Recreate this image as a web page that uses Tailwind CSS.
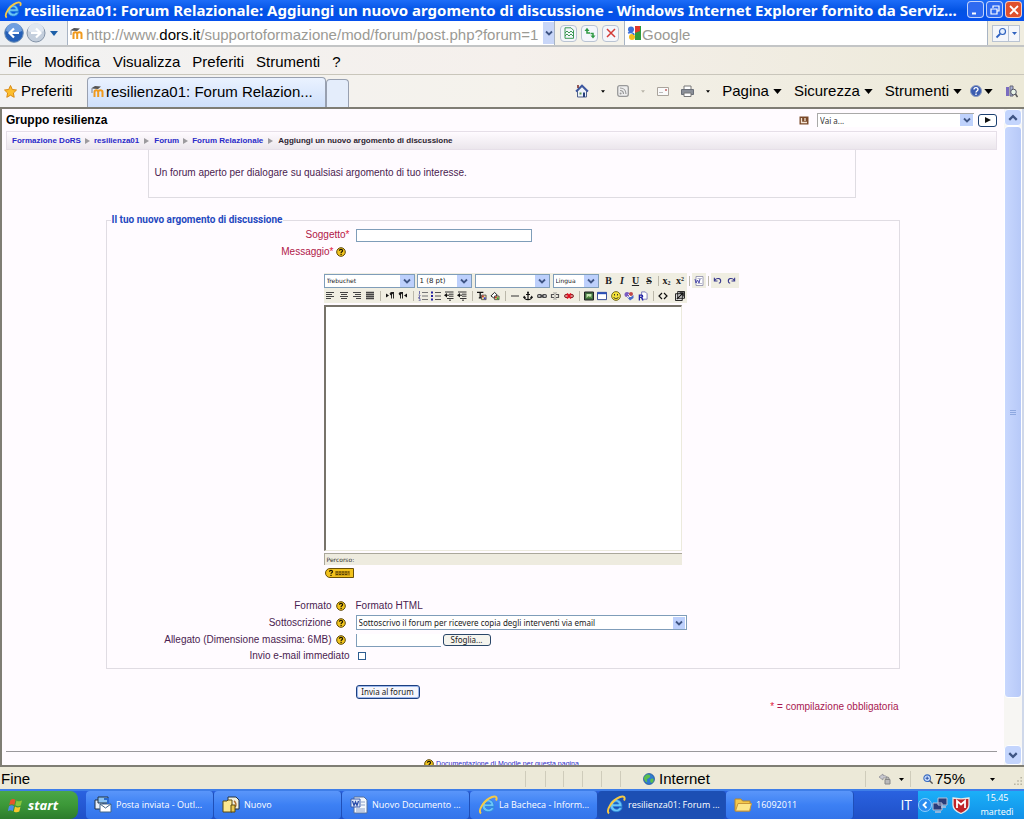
<!DOCTYPE html>
<html lang="it">
<head>
<meta charset="utf-8">
<title>resilienza01: Forum Relazionale: Aggiungi un nuovo argomento di discussione</title>
<script src="https://cdn.jsdelivr.net/npm/@tailwindcss/browser@4"></script>
</head>
<body class="flex h-screen flex-col overflow-hidden bg-[#ece9d8] font-['Liberation_Sans',sans-serif] text-black">

<svg class="hidden" aria-hidden="true">
  <symbol id="ie" viewBox="0 0 20 20"><path d="M16 11.500H7.200c.2 3 5 3.600 6 1.200h3c-2 6-12.200 5.300-12.200-2.200 0-8 12-8.500 12 1zM7.300 9h5.500c-.4-2.800-5-2.800-5.500 0z" fill="#6cc6f8" stroke="#2a86d8" stroke-width=".8"/><path d="M3 18.500C-.5 15.500 6 5 14 2c4-1.500 5.500.5 4 3.500" fill="none" stroke="#f6c945" stroke-width="2"/></symbol>
  <symbol id="moodle" viewBox="0 0 14 13"><path d="M3.500 12V7c0-2.500 3.700-2.500 3.700 0v5M7.200 7c0-2.500 4.300-2.500 4.300 0v5" fill="none" stroke="#f09a1c" stroke-width="2"/><path d="M0 3.500 4 1l6 .5-3 2.500z" fill="#555"/><path d="M1 4v4" stroke="#666" stroke-width=".8"/></symbol>
  <symbol id="chev" viewBox="0 0 8 8"><path d="M1 2.500 4 5.500l3-3" fill="none" stroke="#3f5584" stroke-width="1.800"/></symbol>
  <symbol id="tri" viewBox="0 0 10 6"><path d="M0 0h10L5 6z" fill="currentColor"/></symbol>
  <symbol id="sep" viewBox="0 0 5 6"><path d="M0 0l5 3-5 3z" fill="#9c9a9e"/></symbol>
  <symbol id="help" viewBox="0 0 10 10"><circle cx="5" cy="5" r="4.300" fill="#f2c51e" stroke="#5c4708" stroke-width="1"/><path d="M3.400 3.800c0-2 3.200-2 3.200 0 0 1-1.500 1-1.500 2.100M5.100 6.800v1.300" fill="none" stroke="#1a1400" stroke-width="1.200"/></symbol>
  <symbol id="al" viewBox="0 0 10 10"><path d="M1 1.500h8M1 3.500h6M1 5.500h8M1 7.500h5" stroke="#444"/></symbol>
  <symbol id="ac" viewBox="0 0 10 10"><path d="M1 1.500h8M2 3.500h6M1 5.500h8M2 7.500h6" stroke="#444"/></symbol>
  <symbol id="ar" viewBox="0 0 10 10"><path d="M1 1.500h8M3 3.500h6M1 5.500h8M4 7.500h5" stroke="#444"/></symbol>
  <symbol id="aj" viewBox="0 0 10 10"><path d="M1 1.500h8M1 3.500h8M1 5.500h8M1 7.500h8" stroke="#444" stroke-width="1.300"/></symbol>
  <symbol id="ltr" viewBox="0 0 10 10"><path d="M1 2.500v4L4 4.500z" fill="#111"/><path d="M6.500 1.500v6M8.500 1.500v6M9 1.500H6.500a1.300 1.300 0 0 0 0 2.600" fill="#111" stroke="#111" stroke-width=".9"/></symbol>
  <symbol id="rtl" viewBox="0 0 10 10"><path d="M9 2.500v4L6 4.500z" fill="#111"/><path d="M2.500 1.500v6M4.500 1.500v6M5 1.500H2.500a1.300 1.300 0 0 0 0 2.600" fill="#111" stroke="#111" stroke-width=".9"/></symbol>
  <symbol id="ol" viewBox="0 0 10 10"><path d="M4 1.500h6M4 5h6M4 8.500h6" stroke="#777"/><path d="M1.500 0v3M.5 4h1.500v1L.5 6.500H2M.5 7.500H2v2.500H.5" fill="none" stroke="#5050a0" stroke-width=".8"/></symbol>
  <symbol id="ul" viewBox="0 0 10 10"><path d="M4 1.500h6M4 5h6M4 8.500h6" stroke="#555"/><path d="M0 .5h2v2H0zM0 4h2v2H0zM0 7.500h2v2H0z" fill="#2222a0"/></symbol>
  <symbol id="out" viewBox="0 0 10 10"><path d="M1 1h8.500M5 3.200h4.500M5 5.200h4.500M3 7.500h6.500M5 9.200h2" stroke="#333"/><path d="M0 4.200 3 2v4.400z" fill="#111"/><path d="M2 4.200h3" stroke="#111"/></symbol>
  <symbol id="fc" viewBox="0 0 11 10"><path d="M0 1h7M3.500 1v6M2 7h3" stroke="#111" stroke-width="1.400"/><path d="M5 4h5v5H5z" fill="#e8e0a0" stroke="#333" stroke-width=".8"/><path d="M5.500 4.500h2v2h-2z" fill="#c33"/><path d="M7.500 6.500h2v2h-2z" fill="#33c"/></symbol>
  <symbol id="bc" viewBox="0 0 11 10"><path d="M1 5 5 1l3 3-4 3z" fill="#fff" stroke="#111"/><path d="M5 5h5v4H5z" fill="#e8d890" stroke="#333" stroke-width=".8"/><path d="M5.500 5.500h2v2h-2z" fill="#c33"/><path d="M7.500 6.500h2v2h-2z" fill="#3a3"/></symbol>
  <symbol id="hr" viewBox="0 0 10 10"><path d="M1 5h8" stroke="#333"/></symbol>
  <symbol id="anchor" viewBox="0 0 10 10"><path d="M5 2v7M3 3.500h4M1 6c.5 3.500 7.500 3.500 8 0M.5 7l.7-1.500L2.500 7M7.500 7l1.200-1.500L9.500 7" fill="none" stroke="#111" stroke-width="1.200"/><circle cx="5" cy="1.500" r="1" fill="#111"/></symbol>
  <symbol id="link" viewBox="0 0 10 10"><rect x=".6" y="3.500" width="4" height="3" rx="1.300" fill="#bbb" stroke="#444" stroke-width="1.100"/><rect x="5.400" y="3.500" width="4" height="3" rx="1.300" fill="#bbb" stroke="#444" stroke-width="1.100"/><path d="M3 5h4" stroke="#444" stroke-width="1.300"/></symbol>
  <symbol id="unlink" viewBox="0 0 10 10"><path d="M4 3.500H1.500v3H4M6 3.500h2.500v3H6" fill="none" stroke="#555" stroke-width="1.200"/><path d="M5 1v8M3.500 1.500l.5 1M6.500 1.500l-.5 1M3.500 8.500l.5-1M6.500 8.500l-.5-1" stroke="#888" stroke-width=".8"/></symbol>
  <symbol id="nolink" viewBox="0 0 10 10"><rect x=".6" y="3.500" width="4" height="3" rx="1.300" fill="#d88" stroke="#722"/><rect x="5.400" y="3.500" width="4" height="3" rx="1.300" fill="#d88" stroke="#722"/><path d="m3 2.500 4 5M7 2.500l-4 5" stroke="#e01020" stroke-width="1.800"/></symbol>
  <symbol id="img" viewBox="0 0 10 10"><path d="M.5 1h9v8h-9z" fill="#3d6b3d" stroke="#222"/><path d="M2.500 3h5v4h-5z" fill="#c6e7b0"/><path d="m2.500 7 2-2 1.500 1 1.500-1v2z" fill="#4f8a3a"/></symbol>
  <symbol id="tbl" viewBox="0 0 11 10"><path d="M.5 1h10v8H.5z" fill="#fff" stroke="#223a8a"/><path d="M.5 2h10" stroke="#2a50b8" stroke-width="2"/></symbol>
  <symbol id="smile" viewBox="0 0 10 10"><circle cx="5" cy="5" r="4.400" fill="#f4e23a" stroke="#5c520a" stroke-width=".8"/><path d="M3.500 3v1.500M6.500 3v1.500M2.500 6c1 2 4 2 5 0" fill="none" stroke="#222" stroke-width=".9"/></symbol>
  <symbol id="chr" viewBox="0 0 10 10"><circle cx="3" cy="3.500" r="2.500" fill="#7a5cc0"/><circle cx="7" cy="3" r="2" fill="#c04848"/><path d="M3 6h4l2.500-2v3L6 9.500z" fill="#4a6ac8"/><path d="M4 3l3 3M3 5l2 2" stroke="#fff" stroke-width=".8"/></symbol>
  <symbol id="find" viewBox="0 0 11 10"><path d="M4 .5h4l2 2v6H4z" fill="#fff" stroke="#55a" stroke-width=".8"/><path d="M1.500 10V4H4c1.500 0 1.500 2.500 0 2.500H2M4 6.500 5.500 10" fill="none" stroke="#2222a8" stroke-width="1.400"/></symbol>
  <symbol id="code" viewBox="0 0 10 10"><path d="M4 2 1 5l3 3M6 2l3 3-3 3" fill="none" stroke="#111" stroke-width="1.200"/></symbol>
  <symbol id="full" viewBox="0 0 11 11"><path d="M3 .5h7.500V8H3zM.5 3H8v7.500H.5z" fill="#ddd" stroke="#111"/><path d="m2 9 7-7M5 2h4v4" fill="none" stroke="#111" stroke-width="1.300"/></symbol>
  <symbol id="word" viewBox="0 0 10 10"><path d="M2 .5h7v9H2z" fill="#fff" stroke="#88a" stroke-width=".8"/><path d="M3.500 2.500H8M3.500 7.500H8" stroke="#99b" stroke-width=".7"/><path d="m1 3 1 4 1.500-3L5 7l1-4" fill="none" stroke="#4a48a8"/></symbol>
  <symbol id="undo" viewBox="0 0 10 10"><path d="M2 4.500C4 2 9 2 8.500 6c0 1-.8 1.800-2 2M1.500 2v3.500H5" fill="none" stroke="#38388c" stroke-width="1.200"/></symbol>
  <symbol id="flag" viewBox="0 0 16 15"><path d="M2.500 2c2-1.500 3.500-1 5 0L6.300 7C5 6 3.500 5.700 1.200 7z" fill="#e8542c"/><path d="M8.500 2.500c2 1.200 3.500 1 5.500 0L12.800 7.500c-2 1-3.500 1-5.500-.2z" fill="#8cc63c"/><path d="M1 8.200c2-1.200 3.500-1 5 0L4.800 13C3.500 12 2 11.800-.2 13z" fill="#4a8ce8"/><path d="M7 8.600c2 1.200 3.500 1 5.500.2L11.300 13.600c-2 1-3.500 1-5.500-.2z" fill="#f8c82c"/></symbol>
</svg>

<header class="flex h-[21px] shrink-0 items-start bg-linear-to-b from-[#1c6cf8] via-[#0353e4] to-[#0550ee] pl-1 pr-0.5">
  <svg class="mt-px size-[18px] shrink-0"><use href="#ie"/></svg>
  <h1 class="ml-0.5 min-w-0 flex-1 truncate font-['Noto_Sans',sans-serif] text-[15px] font-bold leading-5 text-white">resilienza01: Forum Relazionale: Aggiungi un nuovo argomento di discussione - Windows Internet Explorer fornito da Serviz...</h1>
  <div class="mt-px flex shrink-0 gap-0.5">
    <button aria-label="Riduci a icona" class="grid size-[17px] place-items-center rounded-sm border border-white/70 bg-[#2f6af0]"><svg viewBox="0 0 12 12" class="size-3"><path d="M2 9.500h4" stroke="#fff" stroke-width="2"/></svg></button>
    <button aria-label="Ripristina" class="grid size-[17px] place-items-center rounded-sm border border-white/70 bg-[#2f6af0]"><svg viewBox="0 0 12 12" class="size-3"><path d="M4 4V2h6v5H8M2 5h6v5H2z" fill="none" stroke="#fff" stroke-width="1.200"/></svg></button>
    <button aria-label="Chiudi" class="grid size-[17px] place-items-center rounded-sm border border-white/70 bg-[#e0502c]"><svg viewBox="0 0 12 12" class="size-3"><path d="m2 2 8 8M10 2l-8 8" stroke="#fff" stroke-width="1.800"/></svg></button>
  </div>
</header>

<div class="flex h-[26px] shrink-0 items-stretch border-b-2 border-[#c3c5c6] bg-[#eceff2]">
  <div class="flex w-[67px] shrink-0 items-center pl-1">
    <button aria-label="Indietro"><svg viewBox="0 0 20 20" class="size-5"><circle cx="10" cy="10" r="9.300" fill="#2460b8" stroke="#6d8fb5"/><path d="M2 8a8 8 0 0 1 16 0c-5 2-11 2-16 0z" fill="#6f9fe0"/><path d="M15 10H6M10 5.500 5.500 10l4.500 4.500" fill="none" stroke="#fff" stroke-width="2.200"/></svg></button>
    <button aria-label="Avanti" class="ml-0.5"><svg viewBox="0 0 20 20" class="size-5"><circle cx="10" cy="10" r="9" fill="#c3cedc" stroke="#8494a8"/><path d="M2 8a8 8 0 0 1 16 0c-5 2-11 2-16 0z" fill="#dfe6ef"/><path d="M5 10h9M10 5.500l4.500 4.500-4.500 4.500" fill="none" stroke="#fff" stroke-width="2.200"/></svg></button>
    <button aria-label="Cronologia" class="ml-1 text-[#1b5fa8]"><svg class="h-[5px] w-2"><use href="#tri"/></svg></button>
  </div>
  <form class="flex w-[488px] shrink-0 items-center border-x border-[#a8b4c4] bg-white pl-0.5">
    <svg class="h-[13px] w-[14px] shrink-0"><use href="#moodle"/></svg>
    <div class="ml-0.5 mt-1 min-w-0 flex-1 overflow-hidden whitespace-nowrap text-[15px] leading-5 text-[#9b9a94]" role="textbox" aria-label="Indirizzo">http://www.<span class="text-black">dors.it</span>/supportoformazione/mod/forum/post.php?forum=1</div>
    <button type="button" aria-label="Indirizzi" class="grid h-[22px] w-[11px] place-items-center bg-[#c8d6f8]"><svg class="size-2"><use href="#chev"/></svg></button>
  </form>
  <div class="flex w-[69px] shrink-0 items-center justify-center gap-1 bg-[#f4f2ea]">
    <button aria-label="Visualizzazione compatibilità" class="grid size-[17px] place-items-center rounded-sm border border-[#b9c3d2] bg-[#f4f6fb]"><svg viewBox="0 0 12 12" class="size-3"><path d="M2 .8h6l2.500 2.500v8H2zM2 6l2-2 2 2 2-2 2 2M2 9l2-2 2 2 2-2 2 2" fill="none" stroke="#3d9a54"/></svg></button>
    <button aria-label="Aggiorna" class="grid size-[17px] place-items-center rounded-sm border border-[#b9c3d2] bg-[#f4f6fb]"><svg viewBox="0 0 12 12" class="size-3"><path d="M3 3.500V6h3M9 9V6.500H6.500" fill="none" stroke="#2f9a44" stroke-width="1.500"/><path d="M.5 4 3 .8 5.500 4zM6.500 8.500 9 11.500 11.500 8.500z" fill="#2f9a44"/></svg></button>
    <button aria-label="Interrompi" class="grid size-[17px] place-items-center rounded-sm border border-[#b9c3d2] bg-[#f4f6fb]"><svg viewBox="0 0 12 12" class="size-3"><path d="m2 2 8 8M10 2l-8 8" stroke="#d43a36" stroke-width="1.500"/></svg></button>
  </div>
  <form class="flex min-w-0 flex-1 items-center border-x border-[#a8b4c4] bg-white pl-0.5">
    <svg viewBox="0 0 14 14" class="size-[14px] shrink-0"><path d="M7 0h7v14H7z" fill="#2e9a3c"/><path d="M8 0h5v5l-5 2z" fill="#e03a2c"/><path d="M0 0h8v14H0z" fill="#fff"/><circle cx="4" cy="3.500" r="3" fill="#3a6fd8"/><circle cx="5" cy="11" r="3" fill="#f2bc20"/><path d="M1 7c3-1 6 0 6 2" stroke="#3a6fd8" stroke-width="1.500" fill="none"/></svg>
    <input aria-label="Cerca" placeholder="Google" class="ml-px mt-1 min-w-0 flex-1 text-[15px] leading-5 outline-none placeholder:text-[#9b9a94]">
  </form>
  <div class="flex w-9 shrink-0 items-center bg-[#f0ede0] pl-1">
    <button aria-label="Avvia ricerca" class="grid h-[17px] w-[17px] place-items-center border border-[#b9c3d2] bg-[#f4f6fb]"><svg viewBox="0 0 12 12" class="size-3"><circle cx="7.500" cy="4.500" r="3" fill="#e6f0ff" stroke="#2f62c0" stroke-width="1.200"/><path d="M5 7 1.500 10.500" stroke="#2f62c0" stroke-width="1.800"/></svg></button>
    <button aria-label="Opzioni di ricerca" class="grid h-[17px] w-[11px] place-items-center border-y border-r border-[#b9c3d2] bg-[#f4f6fb] text-[#2f62c0]"><svg class="h-[3px] w-[5px]"><use href="#tri"/></svg></button>
  </div>
</div>

<nav aria-label="Menu" class="flex h-7 shrink-0 items-center gap-3 border-b border-[#c9c6bb] bg-linear-to-r from-[#f2f2f2] via-[#f5f0ec] to-[#ece9d8] pl-2 pt-0.5 text-[15px] leading-5">
  <button>File</button><button>Modifica</button><button class="ml-px">Visualizza</button><button>Preferiti</button><button>Strumenti</button><button>?</button>
</nav>

<div class="flex h-[32px] shrink-0 items-stretch bg-linear-to-r from-[#f2f2f2] via-[#f5f2ec] to-[#ece9d8]">
  <button class="flex w-[87px] shrink-0 items-center gap-1 pl-1 text-[15px] leading-5">
    <svg viewBox="0 0 13 13" class="size-[13px]"><path d="m6.500.5 1.800 4 4.200.5-3.100 3 .8 4.300-3.700-2.100-3.700 2.100.8-4.300L.5 5l4.200-.5z" fill="#fdbf2d" stroke="#d98a14"/></svg>Preferiti</button>
  <button class="mt-0.5 flex w-[239px] shrink-0 items-center gap-px rounded-t-sm border border-b-0 border-[#98a0b0] bg-linear-to-b from-[#eaf2ff] to-[#cfe0fb] pb-0.5 pl-[3px] text-[15px] leading-5">
    <svg class="h-[13px] w-[14px] shrink-0"><use href="#moodle"/></svg><span class="truncate">resilienza01: Forum Relazion...</span></button>
  <button aria-label="Nuova scheda" class="mt-1 w-[23px] shrink-0 rounded-t-sm border border-b-0 border-[#98a0b0] bg-[#e4edfb]"></button>
  <div class="flex flex-1 items-center justify-end gap-3 pr-1.5 text-[15px] leading-5">
    <button aria-label="Pagina iniziale" class="flex items-center gap-3"><svg viewBox="0 0 14 14" class="size-[14px]"><path d="M2.500 7v6h9V7L7 2.500z" fill="#eef2fa" stroke="#50628c"/><path d="M1 7.500 7 1.500l6 6" fill="none" stroke="#3d58a0" stroke-width="1.800"/><path d="M3 1v3" stroke="#7a3030" stroke-width="1.600"/><path d="M8 8.500h2V13H8z" fill="#26407c"/><path d="M4.500 8.500h2v2h-2z" fill="#5a9a50"/></svg><svg class="h-[3px] w-1"><use href="#tri"/></svg></button>
    <button aria-label="Feed" class="flex items-center gap-3 text-[#b8b5aa]"><svg viewBox="0 0 12 12" class="size-3"><rect x=".7" y=".7" width="10.600" height="10.600" rx="2" fill="#eee" stroke="#999" stroke-width="1.300"/><path d="M3 5.500c2 0 3.500 1.500 3.500 3.500M3 3c3.500 0 6 2.500 6 6" fill="none" stroke="#999" stroke-width="1.200"/><circle cx="3.600" cy="8.500" r="1" fill="#999"/></svg><svg class="h-[3px] w-1"><use href="#tri"/></svg></button>
    <button aria-label="Posta"><svg viewBox="0 0 12 9" class="h-[9px] w-3"><path d="M.5.5h11v8H.5z" fill="#fafafa" stroke="#aaa49c"/><path d="M8 2h2v2H8z" fill="#d08a8a"/><path d="M2 5.500h4" stroke="#bbb"/></svg></button>
    <button aria-label="Stampa" class="flex items-center gap-3"><svg viewBox="0 0 13 12" class="h-3 w-[13px]"><path d="M3 1h7v4H3z" fill="#fff" stroke="#777"/><path d="M.5 4.500h12v5H.5z" fill="#8a8f98" stroke="#6a6f78"/><path d="M3 8h7v3.500H3z" fill="#fff" stroke="#777"/></svg><svg class="h-[3px] w-1"><use href="#tri"/></svg></button>
    <button class="flex items-center gap-1">Pagina<svg class="h-[5px] w-[9px]"><use href="#tri"/></svg></button>
    <button class="flex items-center gap-1">Sicurezza<svg class="h-[5px] w-[9px]"><use href="#tri"/></svg></button>
    <button class="flex items-center gap-1">Strumenti<svg class="h-[5px] w-[9px]"><use href="#tri"/></svg></button>
    <button aria-label="Guida" class="-ml-1 flex items-center gap-0.5"><svg viewBox="0 0 12 12" class="size-3"><circle cx="6" cy="6" r="5.500" fill="#3a5cb0" stroke="#8a9ac0"/><path d="M4 4.500c0-2.500 4-2.500 4 0C8 6 6 6 6 7.500M6 8.500V10" fill="none" stroke="#fff" stroke-width="1.400"/></svg><svg class="h-[5px] w-[9px]"><use href="#tri"/></svg></button>
    <button aria-label="Ricerche"><svg viewBox="0 0 13 13" class="size-[13px]"><path d="M1 2h3v9H1z" fill="#7a6cc0"/><path d="M5 1h3v10H5z" fill="#a8b0d8" stroke="#667"/><circle cx="8.500" cy="7" r="2.800" fill="#e8f4e8" stroke="#556"/><path d="m10.500 9 2 3" stroke="#555" stroke-width="1.500"/></svg></button>
  </div>
</div>

<div class="flex min-h-0 flex-1 border-b-2 border-l-2 border-t-2 border-[#7f7d74] bg-[#fffbff]">
  <main class="min-w-0 flex-1 overflow-hidden pl-1 pr-[7px] text-[10px] leading-3 text-[#4a1c50]">
    <div class="flex h-[22px] items-center">
      <h2 class="flex-1 text-[12px] font-bold leading-4 text-black">Gruppo resilienza</h2>
      <svg viewBox="0 0 10 9" class="mr-2 h-[9px] w-[10px]"><path d="M.5.500h9v8h-9z" fill="#7a4a2a"/><path d="M2.500 2v5M6 2v3M2 6.500h6" fill="none" stroke="#f4e4d4" stroke-width="1.300"/></svg>
      <div class="grid w-[157px] items-center">
        <select aria-label="Vai a" class="h-[14px] appearance-none border-l border-t border-[#a9a9a8] bg-white pl-0.5 font-['Noto_Sans',sans-serif] text-[8px] leading-3 text-[#333] [grid-area:1/1]"><option>Vai a...</option></select>
        <span class="pointer-events-none mr-px grid h-3 w-[13px] place-items-center justify-self-end bg-[#c0d2fc] [grid-area:1/1]"><svg class="size-2"><use href="#chev"/></svg></span>
      </div>
      <button aria-label="Vai" class="ml-1 grid h-[13px] w-[19px] place-items-center rounded-[3px] border border-[#1c3f70] bg-white"><svg viewBox="0 0 6 6" class="size-[6px]"><path d="M0 0v6l6-3z" fill="#111"/></svg></button>
    </div>
    <nav aria-label="Percorso" class="flex h-[19px] items-center gap-1 border border-[#e6dfe8] bg-linear-to-b from-[#fffbff] to-[#ebe6ec] pl-[5px] text-[8px] font-bold leading-3 text-[#2a2ac8]">
      <a href="#">Formazione DoRS</a><svg class="h-1.5 w-[5px]"><use href="#sep"/></svg><a href="#">resilienza01</a><svg class="ml-px h-1.5 w-[5px]"><use href="#sep"/></svg><a href="#" class="ml-px">Forum</a><svg class="h-1.5 w-[5px]"><use href="#sep"/></svg><a href="#">Forum Relazionale</a><svg class="ml-px h-1.5 w-[5px]"><use href="#sep"/></svg><span class="ml-px text-[#2c2430]">Aggiungi un nuovo argomento di discussione</span>
    </nav>
    <p class="mx-auto h-12 w-[708px] border border-t-0 border-[#dfdce2] px-1.5 pt-[17px]">Un forum aperto per dialogare su qualsiasi argomento di tuo interesse.</p>

    <form class="pl-0.5">
      <fieldset class="mx-auto mt-4 w-[794px] max-w-full border border-[#e0dce3] pb-[5px]">
        <legend class="ml-1 px-px font-['Roboto',sans-serif] text-[10px] font-bold leading-3 text-[#1f49c0]">Il tuo nuovo argomento di discussione</legend>
        <div class="grid grid-cols-[243px_1fr] items-center gap-x-1.5">
          <label for="sogg" class="text-right text-[#b01848]">Soggetto<span class="text-[#e0203c]">*</span></label>
          <div class="flex h-[18px] items-center pt-px"><input id="sogg" class="h-[13px] w-[176px] border border-[#7f9db9] bg-white px-0.5 text-[9px]"></div>
          <label for="msg" class="flex h-4 items-center justify-end gap-0.5 pr-1 text-[#b01848]"><span>Messaggio<span class="text-[#e0203c]">*</span></span><svg class="size-[10px]"><use href="#help"/></svg></label>
        </div>

        <div class="mx-auto mt-[13px] w-[358px]">
          <div class="flex h-[15px] w-[416px] items-center">
            <div class="flex h-full w-[363px] items-center bg-[#f0eee2] text-[#222]">
              <div class="grid w-[91px] items-center"><select aria-label="Carattere" class="h-[14px] appearance-none border border-[#7f9db9] bg-white pl-0.5 font-['DejaVu_Sans',sans-serif] text-[6px] [grid-area:1/1]"><option>Trebuchet</option></select><span class="pointer-events-none mr-px grid h-3 w-[14px] place-items-center justify-self-end bg-[#bdd0fc] [grid-area:1/1]"><svg class="size-2"><use href="#chev"/></svg></span></div>
              <div class="ml-0.5 grid w-[55px] items-center"><select aria-label="Dimensione" class="h-[14px] appearance-none border border-[#7f9db9] bg-white pl-0.5 font-['DejaVu_Sans',sans-serif] text-[7px] [grid-area:1/1]"><option>1 (8 pt)</option></select><span class="pointer-events-none mr-px grid h-3 w-[14px] place-items-center justify-self-end bg-[#bdd0fc] [grid-area:1/1]"><svg class="size-2"><use href="#chev"/></svg></span></div>
              <div class="ml-[3px] grid w-[75px] items-center"><select aria-label="Stile" class="h-[14px] appearance-none border border-[#7f9db9] bg-white [grid-area:1/1]"><option></option></select><span class="pointer-events-none mr-px grid h-3 w-[14px] place-items-center justify-self-end bg-[#bdd0fc] [grid-area:1/1]"><svg class="size-2"><use href="#chev"/></svg></span></div>
              <div class="ml-[3px] grid w-[46px] items-center"><select aria-label="Lingua" class="h-[14px] appearance-none border border-[#7f9db9] bg-white pl-0.5 font-['DejaVu_Sans',sans-serif] text-[6px] [grid-area:1/1]"><option>Lingua</option></select><span class="pointer-events-none mr-px grid h-3 w-[14px] place-items-center justify-self-end bg-[#bdd0fc] [grid-area:1/1]"><svg class="size-2"><use href="#chev"/></svg></span></div>
              <div class="ml-[3px] flex flex-1 items-center font-['Liberation_Serif',serif] text-[10px] font-bold leading-3">
                <button type="button" class="w-[14px]">B</button><button type="button" class="w-[13px] italic">I</button><button type="button" class="w-[14px] underline">U</button><button type="button" class="w-[13px] line-through">S</button>
                <span class="ml-0.5 h-[10px] w-px bg-[#bbb8aa]"></span>
                <button type="button" class="ml-px w-[14px]">x<sub class="text-[6px]">2</sub></button><button type="button" class="w-[13px]">x<sup class="text-[6px]">2</sup></button>
              </div>
            </div>
            <span class="ml-0.5 h-[10px] w-px bg-[#bbb8aa]"></span>
            <button type="button" aria-label="Pulisci codice Word" class="ml-0.5 grid h-full w-[14px] place-items-center bg-[#f0eee2]"><svg class="size-[10px]"><use href="#word"/></svg></button>
            <span class="mx-0.5 h-[10px] w-px bg-[#bbb8aa]"></span>
            <div class="flex h-full items-center bg-[#f0eee2]">
              <button type="button" aria-label="Annulla" class="grid w-[14px] place-items-center"><svg class="size-[9px]"><use href="#undo"/></svg></button>
              <button type="button" aria-label="Ripeti" class="grid w-[14px] place-items-center"><svg class="size-[9px] -scale-x-100"><use href="#undo"/></svg></button>
            </div>
          </div>
          <div class="flex h-[15px] w-[363px] items-center bg-[#f0eee2] text-[#444] [&>button]:grid [&>button]:w-[13px] [&>button]:shrink-0 [&>button]:place-items-center [&>span]:mx-[3px] [&>span]:h-[10px] [&>span]:w-px [&>span]:bg-[#bbb8aa] [&_svg]:size-[10px]">
            <button type="button" aria-label="Sinistra"><svg><use href="#al"/></svg></button><button type="button" aria-label="Centra" class="ml-px"><svg><use href="#ac"/></svg></button><button type="button" aria-label="Destra"><svg><use href="#ar"/></svg></button><button type="button" aria-label="Giustifica"><svg><use href="#aj"/></svg></button>
            <span></span>
            <button type="button" aria-label="Da sinistra a destra"><svg><use href="#ltr"/></svg></button><button type="button" aria-label="Da destra a sinistra"><svg><use href="#rtl"/></svg></button>
            <span></span>
            <button type="button" aria-label="Elenco numerato"><svg><use href="#ol"/></svg></button><button type="button" aria-label="Elenco puntato"><svg><use href="#ul"/></svg></button><button type="button" aria-label="Riduci rientro"><svg><use href="#out"/></svg></button><button type="button" aria-label="Aumenta rientro"><svg><use href="#out"/></svg></button>
            <span></span>
            <button type="button" aria-label="Colore testo"><svg><use href="#fc"/></svg></button><button type="button" aria-label="Colore sfondo"><svg><use href="#bc"/></svg></button>
            <span></span>
            <button type="button" aria-label="Riga"><svg><use href="#hr"/></svg></button><button type="button" aria-label="Ancora"><svg><use href="#anchor"/></svg></button><button type="button" aria-label="Link" class="ml-px"><svg><use href="#link"/></svg></button><button type="button" aria-label="Rimuovi link"><svg><use href="#unlink"/></svg></button><button type="button" aria-label="Evita link" class="ml-px"><svg><use href="#nolink"/></svg></button>
            <span></span>
            <button type="button" aria-label="Immagine"><svg><use href="#img"/></svg></button><button type="button" aria-label="Tabella"><svg><use href="#tbl"/></svg></button><button type="button" aria-label="Faccina" class="ml-px"><svg><use href="#smile"/></svg></button><button type="button" aria-label="Carattere speciale"><svg><use href="#chr"/></svg></button><button type="button" aria-label="Trova" class="ml-px"><svg><use href="#find"/></svg></button>
            <span></span>
            <button type="button" aria-label="HTML"><svg><use href="#code"/></svg></button><button type="button" aria-label="Schermo intero" class="ml-1"><svg><use href="#full"/></svg></button>
          </div>
          <textarea id="msg" class="mt-0.5 block h-[246px] w-full resize-none border-l-2 border-t-2 border-[#77736a] border-b border-r border-b-[#eceadd] border-r-[#eceadd] bg-white p-1 text-[10px]"></textarea>
          <div class="mt-0.5 h-3 border-l border-t border-[#aaa79a] bg-[#eeebdf] pl-0.5 font-['DejaVu_Sans',sans-serif] text-[6px] leading-[11px] text-[#333]">Percorso:</div>
          <button type="button" aria-label="Scorciatoie da tastiera" class="mt-[3px] block pl-px"><svg viewBox="0 0 29 10" class="h-[10px] w-[29px]"><path d="M5 .5h23.500v9H5A4 4 0 0 1 5 .5z" fill="#f2c21c" stroke="#6a5008"/><path d="M4.500 3.800c0-2 3-2 3 0 0 1-1.500 1-1.500 2M6 6.800V8" fill="none" stroke="#1a1400" stroke-width="1.200"/><path d="M10 3h15v4.500H10z" fill="#b0860e"/><path d="M11 4h13M11 6.500h12" stroke="#5c4606" stroke-dasharray="2 1"/></svg></button>
        </div>

        <div class="mt-5 grid grid-cols-[243px_1fr] items-center gap-x-1.5">
          <div class="flex h-4 items-center justify-end gap-1 pr-1">Formato<svg class="size-[10px]"><use href="#help"/></svg></div>
          <div>Formato HTML</div>
          <label for="sott" class="flex h-[17px] items-center justify-end gap-1 pr-1">Sottoscrizione<svg class="size-[10px]"><use href="#help"/></svg></label>
          <div class="grid w-[331px] items-center">
            <select id="sott" class="h-[15px] appearance-none border border-[#7f9db9] bg-white pl-0.5 font-['Noto_Sans',sans-serif] text-[8px] leading-3 text-[#222] [grid-area:1/1]"><option>Sottoscrivo il forum per ricevere copia degli interventi via email</option></select>
            <span class="pointer-events-none mr-0.5 grid h-3 w-3 place-items-center justify-self-end bg-[#bdd0fc] [grid-area:1/1]"><svg class="size-2"><use href="#chev"/></svg></span>
          </div>
          <label for="alleg" class="flex h-[18px] items-center justify-end gap-1 pr-1">Allegato (Dimensione massima: 6MB)<svg class="size-[10px]"><use href="#help"/></svg></label>
          <div class="flex items-center gap-0.5"><input id="alleg" class="h-[13px] w-[85px] border-b border-l border-[#7f9db9] bg-white px-0.5 text-[8px]"><button type="button" class="h-3 w-12 rounded-[3px] border border-[#2a4668] bg-[#f5f4ee] font-['Noto_Sans',sans-serif] text-[8px] leading-[10px] text-[#222]">Sfoglia...</button></div>
          <label for="invio" class="h-[14px] text-right leading-[14px]">Invio e-mail immediato</label>
          <div class="flex items-center pl-0.5"><input id="invio" type="checkbox" class="size-2 appearance-none border border-[#2c5c90] bg-white checked:bg-[#2c5c90]"></div>
        </div>
      </fieldset>
      <div class="mx-auto w-[794px] max-w-full">
        <button class="ml-[250px] mt-4 block h-[14px] w-16 rounded-[3px] border border-[#1c3f80] bg-[#f6f6fc] font-['Noto_Sans',sans-serif] text-[8px] leading-3 text-[#222] shadow-[inset_0_0_0_1px_#9db8ec]">Invia al forum</button>
        <p class="mt-0.5 pr-px text-right text-[#a81850]"><span class="text-[#e0203c]">*</span> = compilazione obbligatoria</p>
      </div>
    </form>
    <footer class="mt-[38px] border-t border-[#9a989c] pt-[7px] text-[7px] leading-[10px]"><a href="#" class="flex items-center justify-center gap-0.5 text-[#2a2ac8]"><svg class="size-[10px]"><use href="#help"/></svg>Documentazione di Moodle per questa pagina</a></footer>
  </main>
  <div class="flex w-5 shrink-0 flex-col items-stretch border-r-2 border-[#cfd8ea] bg-[#f7f6f3] text-center">
    <button aria-label="Su" class="grid h-[17px] place-items-center rounded-sm border border-white bg-[#c4d5fd]"><svg class="size-[10px] rotate-180"><use href="#chev"/></svg></button>
    <div class="flex h-[572px] flex-col items-center justify-center gap-px rounded-sm border border-white bg-linear-to-r from-[#c8d7fe] to-[#b7c9f8]"><i class="h-px w-1.5 bg-[#8ea8e0]"></i><i class="h-px w-1.5 bg-[#8ea8e0]"></i><i class="h-px w-1.5 bg-[#8ea8e0]"></i></div>
    <button aria-label="Giù" class="mt-auto grid h-5 place-items-center rounded-sm border border-white bg-[#c4d5fd]"><svg class="size-[10px]"><use href="#chev"/></svg></button>
  </div>
</div>

<div class="flex h-[22px] shrink-0 items-center bg-[#ece9d8] pt-0.5 text-[15px] leading-5">
  <span class="flex-1 pl-px">Fine</span>
  <div class="flex h-4 divide-x divide-[#cfccbb] border-x border-[#cfccbb]"><i class="w-5"></i><i class="w-[18px]"></i><i class="w-[19px]"></i><i class="w-[19px]"></i><i class="w-[18px]"></i></div>
  <div class="ml-[22px] flex w-[222px] items-center gap-1"><svg viewBox="0 0 12 12" class="size-3"><circle cx="6" cy="6" r="5.500" fill="#2f7ad0" stroke="#1d4f90" stroke-width=".7"/><path d="M3 2c3-1 5 0 4 2S3 5 4 8 1.500 8 1 6s1-3 2-4zM8 6c2-1 3 0 2.500 2S8 10.500 7.500 9 7 6.500 8 6z" fill="#5cbf4c"/></svg>Internet</div>
  <div class="flex h-4 w-[45px] items-center gap-2 border-l border-[#cfccbb] pl-3"><svg viewBox="0 0 13 12" class="h-3 w-[13px]"><path d="M5 1 1 4l4 3V5c2 0 3 0 4-1-1-1-2-1.500-4-1.500z" fill="#c8c8d0" stroke="#8a8a94" stroke-width=".7"/><path d="M7 6.500h5V11H7zM8 6.500V5.200c0-1.500 3-1.500 3 0v1.300" fill="#bbb" stroke="#888"/></svg><svg class="h-[3px] w-[5px]"><use href="#tri"/></svg></div>
  <button class="flex h-4 w-[114px] items-center border-l border-[#cfccbb] pl-3"><svg viewBox="0 0 12 12" class="mr-0.5 size-[10px]"><circle cx="5" cy="5" r="4" fill="#cfe2ff" stroke="#3a6cc0" stroke-width="1.300"/><path d="M5 3v4M3 5h4" stroke="#2a52a8" stroke-width="1.300"/><path d="m8 8 3.500 3.500" stroke="#555" stroke-width="1.600"/></svg>75%<svg class="ml-[25px] h-[3px] w-[5px]"><use href="#tri"/></svg><svg viewBox="0 0 10 10" class="ml-auto mr-0.5 mt-1 size-2"><path d="M8 0h2v2H8zM8 4h2v2H8zM8 8h2v2H8zM4 4h2v2H4zM4 8h2v2H4zM0 8h2v2H0z" fill="#b8b5a4"/></svg></button>
</div>

<footer class="flex h-[30px] shrink-0 items-stretch whitespace-nowrap border-t-2 border-[#3f7ee8] bg-linear-to-b from-[#2a62e0] to-[#1f50c8] font-['Open_Sans',sans-serif] text-[9px] leading-4 text-white">
  <button class="mr-2 flex w-[78px] shrink-0 items-center gap-1 rounded-r-lg bg-linear-to-b from-[#4aa648] via-[#3c9838] to-[#2d7c2c] pl-2 font-['Open_Sans',sans-serif] text-[13px] font-bold italic"><svg class="h-[15px] w-4"><use href="#flag"/></svg>start</button>
  <button class="flex w-32 shrink-0 items-center gap-1 rounded-sm border-r border-[#1f4fb8] bg-linear-to-b from-[#5a96fa] via-[#3c80f4] to-[#3474ea] pl-2"><svg viewBox="0 0 18 18" class="size-[18px] shrink-0"><path d="M1 4h8v9H1z" fill="#e8f0fa" stroke="#234"/><path d="M4 1h10v6H4z" fill="#8cc4f4" stroke="#234"/><path d="M6 8h11v8H6z" fill="#fff" stroke="#468"/><path d="m6 8 5.500 4L17 8" fill="none" stroke="#468"/><path d="M10 3h4v5" fill="none" stroke="#2a6ad0" stroke-width="2"/></svg>Posta inviata - Outl...</button>
  <button class="flex w-32 shrink-0 items-center gap-1 rounded-sm border-r border-[#1f4fb8] bg-linear-to-b from-[#5a96fa] via-[#3c80f4] to-[#3474ea] pl-2"><svg viewBox="0 0 18 18" class="size-[18px] shrink-0"><path d="M6 1h8l3 3v9H6z" fill="#f0f0e0" stroke="#234"/><path d="M1 5h4l1-1h4v12H1z" fill="#fbe890" stroke="#5a4a10"/><path d="M12 5a4 4 0 0 1 1 6" fill="none" stroke="#b07030" stroke-width="1.500"/><path d="M9 9h4v7H9z" fill="#e8c850" stroke="#5a4a10"/></svg>Nuovo</button>
  <button class="flex w-32 shrink-0 items-center gap-1 rounded-sm border-r border-[#1f4fb8] bg-linear-to-b from-[#5a96fa] via-[#3c80f4] to-[#3474ea] pl-2"><svg viewBox="0 0 18 18" class="size-[18px] shrink-0"><path d="M4 1h10l3 3v13H4z" fill="#f4f7fc" stroke="#56709c"/><path d="M1 3h9v8H1z" fill="#dfe8f8" stroke="#3a5cac"/><path d="m2.500 5 1.500 4.500L5.500 6 7 9.500 8.500 5" fill="none" stroke="#2a4ca8" stroke-width="1.300"/><path d="M11 6h4M11 9h4M6 13h9M6 15h9" stroke="#8aa0c8"/></svg>Nuovo Documento ...</button>
  <button class="flex w-32 shrink-0 items-center gap-px rounded-sm border-r border-[#1f4fb8] bg-linear-to-b from-[#5a96fa] via-[#3c80f4] to-[#3474ea] pl-2"><svg class="size-5 shrink-0"><use href="#ie"/></svg>La Bacheca - Inform...</button>
  <button class="flex w-32 shrink-0 items-center gap-0.5 rounded-sm border-r border-[#1f4fb8] bg-[#1c4fb4] pl-2"><svg class="size-5 shrink-0"><use href="#ie"/></svg>resilienza01: Forum ...</button>
  <button class="flex w-32 shrink-0 items-center gap-1 rounded-sm border-r border-[#1f4fb8] bg-linear-to-b from-[#5a96fa] via-[#3c80f4] to-[#3474ea] pl-2"><svg viewBox="0 0 18 16" class="h-4 w-[18px] shrink-0"><path d="M1 2h6l1.500 2H16v10H1z" fill="#f4c84c" stroke="#b8862a"/><path d="M1.500 14 4 6.500h13.500L15.500 14z" fill="#fde68a" stroke="#c8963a"/></svg>16092011</button>
  <div class="ml-auto flex items-center pr-1.5 text-[14px]">IT</div>
  <div class="flex w-[106px] shrink-0 items-center bg-linear-to-b from-[#1cb0f8] to-[#1190e8]">
    <button aria-label="Mostra icone nascoste"><svg viewBox="0 0 14 14" class="size-[14px]"><circle cx="7" cy="7" r="6.500" fill="#2a8cf0" stroke="#a8dcff" stroke-width=".8"/><path d="M8.500 4 5.500 7l3 3" fill="none" stroke="#fff" stroke-width="1.800"/></svg></button>
    <svg viewBox="0 0 16 16" class="size-4"><path d="M6 1h9v7H6zM1 6h9v7H1z" fill="#2a3c78" stroke="#b8c0d8"/><path d="M3 15h6M9 10h5" stroke="#b8c0d8" stroke-width="1.500"/></svg>
    <svg viewBox="0 0 18 18" class="ml-1 size-[18px]"><path d="M1 2c5 1 11 1 16 0v7c0 4-4 7-8 8.500C5 16 1 13 1 9z" fill="#c02428" stroke="#e8e8e8" stroke-width="1.300"/><path d="M5 12V5l4 3.500L13 5v7" fill="none" stroke="#fff" stroke-width="1.800"/></svg>
    <div class="flex-1 text-center"><p class="leading-[14px]">15.45</p><p class="leading-[14px]">martedì</p></div>
  </div>
</footer>
</body>
</html>
